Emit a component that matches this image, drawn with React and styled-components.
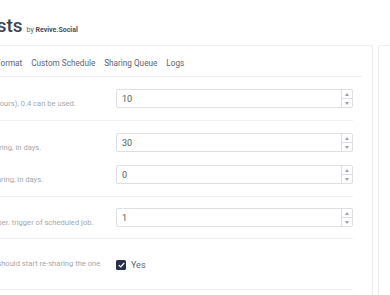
import React from "react";
import styled, { createGlobalStyle } from "styled-components";

const GlobalStyle = createGlobalStyle`
  html, body {
    margin: 0;
    padding: 0;
    background: #ffffff;
    overflow: hidden;
  }
  body {
    font-family: Roboto, "Liberation Sans", sans-serif;
    color: #50596c;
  }
`;

const Page = styled.div`
  width: 723px;
  margin-left: -145px;
`;

const Header = styled.header`
  display: flex;
  align-items: baseline;
  gap: 4px;
  height: 45px;
  box-sizing: border-box;
  padding: 14px 0 0 25px;
`;

const Title = styled.h1`
  margin: 0;
  font-size: 19px;
  font-weight: 500;
  line-height: 24px;
  color: #3b4351;
`;

const Byline = styled.span`
  font-size: 7px;
  color: #5b6372;

  b {
    font-weight: 700;
    color: #454d5d;
  }
`;

const Main = styled.div`
  display: flex;
  gap: 5px;
  height: 250px;
`;

const Card = styled.section`
  width: 518px;
  box-sizing: border-box;
  border: 1px solid #ebedf0;
  border-bottom: none;
  border-radius: 2px 2px 0 0;
  padding: 0 10px;
`;

const Side = styled.aside`
  flex: 1;
  border: 1px solid #ebedf0;
  border-bottom: none;
  border-radius: 2px 2px 0 0;
`;

const Tabs = styled.nav`
  display: flex;
  gap: 9px;
  height: 31px;
  box-sizing: border-box;
  padding: 11px 0 0 0;
  margin-left: -1px;
  border-bottom: 1px solid #eceef1;
`;

const Tab = styled.a`
  font-size: 8.2px;
  line-height: 12px;
  color: ${(p) => (p.$active ? "#3b4351" : "#5b6372")};
  text-decoration: none;
`;

const Body = styled.div`
  padding-right: 9px;
`;

const Section = styled.div`
  display: flex;
  flex-direction: column;
  gap: 9px;
  padding: ${(p) => p.$pad};
  border-bottom: 1px solid #eef0f3;
`;

const Row = styled.div`
  display: grid;
  grid-template-columns: 239px 1fr;
  column-gap: 11px;
  align-items: center;
`;

const Info = styled.div`
  display: flex;
  flex-direction: column;
`;

const Label = styled.b`
  font-size: 9px;
  line-height: 11px;
  font-weight: 700;
  color: #3b4351;
`;

const Desc = styled.p`
  margin: 0;
  font-size: 7.6px;
  line-height: 12px;
  color: #a4a8ae;
`;

const Field = styled.div`
  display: flex;
  height: 19px;
  box-sizing: border-box;
  border: 1px solid #dcdfe5;
  border-radius: 2px;
  background: #fff;
`;

const Value = styled.input`
  flex: 1;
  min-width: 0;
  border: none;
  outline: none;
  padding: 0 0 0 5px;
  font-family: inherit;
  font-size: 9px;
  color: #555a63;
  background: transparent;
`;

const Spinner = styled.div`
  display: flex;
  flex-direction: column;
  width: 10px;
  border-left: 1px solid #dcdfe5;
`;

const SpinButton = styled.span`
  flex: 1;
  display: flex;
  align-items: center;
  justify-content: center;
  border-top: ${(p) => (p.$down ? "1px solid #dcdfe5" : "none")};
  font-size: 0;
`;

const Arrow = styled.i`
  width: 0;
  height: 0;
  border-left: 2.5px solid transparent;
  border-right: 2.5px solid transparent;
  ${(p) =>
    p.$down
      ? "border-top: 3px solid #9aa1ad;"
      : "border-bottom: 3px solid #9aa1ad;"}
`;

const Check = styled.label`
  display: flex;
  align-items: center;
  gap: 5px;
  font-size: 9px;
  color: #5b6372;
`;

const Box = styled.span`
  display: flex;
  align-items: center;
  justify-content: center;
  width: 10px;
  height: 10px;
  border-radius: 1.5px;
  background: #25314d;
`;

function NumberField({ value }) {
  return (
    <Field>
      <Value type="text" defaultValue={value} />
      <Spinner>
        <SpinButton>
          <Arrow />
        </SpinButton>
        <SpinButton $down>
          <Arrow $down />
        </SpinButton>
      </Spinner>
    </Field>
  );
}

function Setting({ label, desc, children }) {
  return (
    <Row>
      <Info>
        <Label>{label}</Label>
        <Desc>{desc}</Desc>
      </Info>
      <div>{children}</div>
    </Row>
  );
}

export default function App() {
  return (
    <>
      <GlobalStyle />
      <Page>
        <Header>
          <Title>Revive Old Posts</Title>
          <Byline>
            by <b>Revive.Social</b>
          </Byline>
        </Header>
        <Main>
          <Card>
            <Tabs>
              <Tab href="#">Accounts</Tab>
              <Tab href="#" $active>
                General Settings
              </Tab>
              <Tab href="#">Post Format</Tab>
              <Tab href="#">Custom Schedule</Tab>
              <Tab href="#">Sharing Queue</Tab>
              <Tab href="#">Logs</Tab>
            </Tabs>
            <Body>
              <Section $pad="10px 0">
                <Setting
                  label="Minimum Interval"
                  desc="Minimum time between shares (Hour/Hours), 0.4 can be used."
                >
                  <NumberField value="10" />
                </Setting>
              </Section>
              <Section $pad="10px 0">
                <Setting
                  label="Minimum Post Age"
                  desc="Minimum age of posts available for sharing, in days."
                >
                  <NumberField value="30" />
                </Setting>
                <Setting
                  label="Maximum Post Age"
                  desc="Maximum age of posts available for sharing, in days."
                >
                  <NumberField value="0" />
                </Setting>
              </Section>
              <Section $pad="9px 0">
                <Setting
                  label="Number of Posts"
                  desc="Number of posts to share per. account per. trigger of scheduled job."
                >
                  <NumberField value="1" />
                </Setting>
              </Section>
              <Section $pad="8px 0 7px">
                <Setting
                  label="Share More Than Once?"
                  desc="If there are no more posts to share, we should start re-sharing the one we previously shared."
                >
                  <Check>
                    <Box>
                      <svg width="7" height="6" viewBox="0 0 7 6">
                        <path
                          d="M0.8 3.1 L2.7 4.9 L6.2 1"
                          fill="none"
                          stroke="#fff"
                          strokeWidth="1.3"
                        />
                      </svg>
                    </Box>
                    Yes
                  </Check>
                </Setting>
              </Section>
            </Body>
          </Card>
          <Side />
        </Main>
      </Page>
    </>
  );
}
